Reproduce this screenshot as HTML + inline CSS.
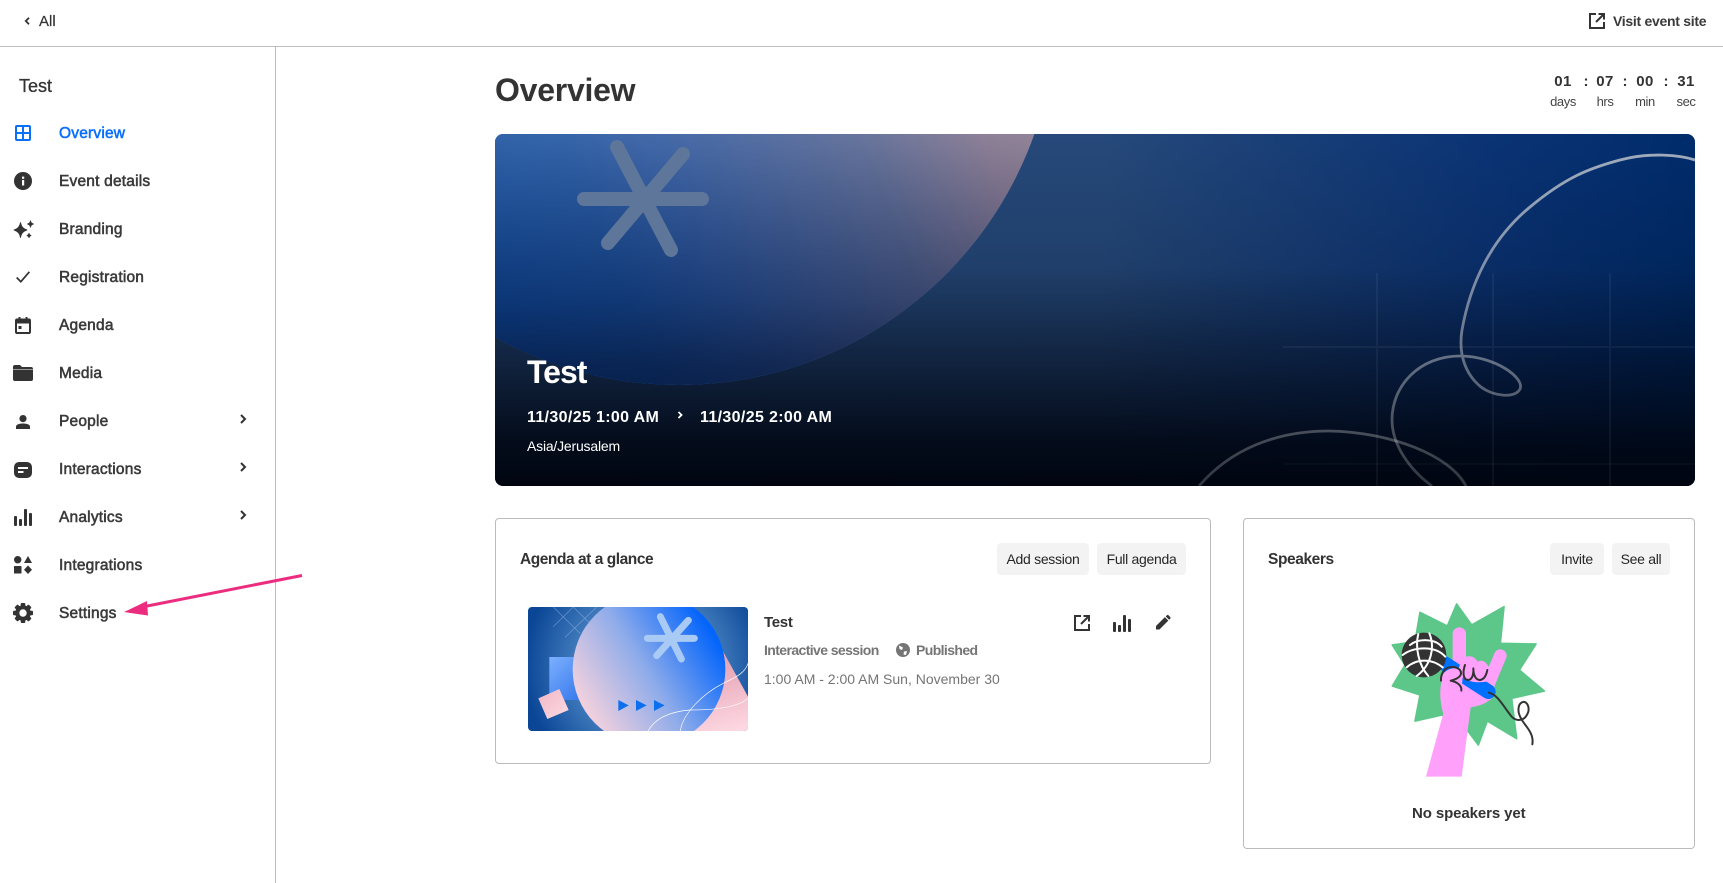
<!DOCTYPE html>
<html lang="en"><head><meta charset="utf-8"><title>Overview</title>
<style>
html,body{margin:0;padding:0;background:#fff;width:1723px;height:883px;overflow:hidden}
body{position:relative;font-family:"Liberation Sans",sans-serif;color:#333}
.t{position:absolute;white-space:nowrap;line-height:20px;height:20px}
.nav{left:59px;font-size:15.5px;font-weight:400;color:#3a3a3a;letter-spacing:.2px;-webkit-text-stroke:.55px currentColor}
.ic{position:absolute;overflow:visible}
.btn{position:absolute;top:543px;height:32px;line-height:32px;background:#f3f3f3;border-radius:4px;text-align:center;font-size:14px;color:#262626;letter-spacing:-.3px}
.card{position:absolute;box-sizing:border-box;border:1px solid #bbb;border-radius:4px;background:#fff}
.num{font-size:15px;font-weight:700;color:#333;text-align:center;width:40px;letter-spacing:.4px}
.lab{font-size:13px;color:#444;text-align:center;width:40px;letter-spacing:-.4px}
.sep{font-size:15px;font-weight:700;color:#333;text-align:center;width:10px}
.h{font-size:15.5px;font-weight:700;color:#333;letter-spacing:-.45px}
.g{font-size:14px;color:#757575;letter-spacing:-.3px}
</style></head><body>

<div style="position:absolute;left:0;top:46px;width:1723px;height:1px;background:#bdbdbd"></div>
<div style="position:absolute;left:275px;top:46px;width:1px;height:837px;background:#bdbdbd"></div>

<svg class="ic" style="left:24px;top:17px" width="6" height="8" viewBox="0 0 6 8"><path d="M5 .8L1.800 4L5 7.200" fill="none" stroke="#333" stroke-width="1.800"/></svg>
<div class="t" style="left:39px;top:12px;font-size:15px;color:#333;-webkit-text-stroke:.2px #333">All</div>

<svg class="ic" style="left:1589px;top:13px" width="16" height="16" viewBox="0 0 16 16"><path d="M7 1H1V15H15V9" fill="none" stroke="#333" stroke-width="2"/><path d="M9.500 1H15V6.500M15 1L7 9" fill="none" stroke="#333" stroke-width="2"/></svg>
<div class="t" style="left:1613px;top:11px;font-size:14px;font-weight:700;color:#3a3a3a;letter-spacing:-.28px">Visit event site</div>

<div class="t" style="left:19px;top:76px;font-size:18px;color:#333;-webkit-text-stroke:.3px #333">Test</div>

<!-- nav icons -->
<svg class="ic" style="left:15px;top:125px" width="16" height="16" viewBox="0 0 16 16"><rect x="1" y="1" width="14" height="14" rx="1" fill="none" stroke="#0a6ffb" stroke-width="2"/><path d="M8 1V15M1 8H15" stroke="#0a6ffb" stroke-width="2"/></svg>
<svg class="ic" style="left:14px;top:172px" width="18" height="18" viewBox="0 0 18 18"><circle cx="9" cy="9" r="9" fill="#333"/><rect x="8" y="8" width="2.200" height="5.500" fill="#fff"/><rect x="8" y="4.600" width="2.200" height="2.200" fill="#fff"/></svg>
<svg class="ic" style="left:13px;top:220px" width="21" height="19" viewBox="0 0 21 19"><g fill="#333" stroke="#333" stroke-width=".8" stroke-linejoin="round"><path d="M7.500 2.500C8.500 7 10 8.500 14 10C10 11.500 8.500 13 7.500 17.500C6.500 13 5 11.500 1 10C5 8.500 6.500 7 7.500 2.500Z"/><path d="M17.500 .8C18 2.800 18.500 3.300 20.500 4C18.500 4.700 18 5.200 17.500 7.200C17 5.200 16.500 4.700 14.500 4C16.500 3.300 17 2.800 17.500 .8Z"/><path d="M16 13.300C16.300 14.600 16.700 15 18 15.500C16.700 16 16.300 16.400 16 17.700C15.700 16.400 15.300 16 14 15.500C15.300 15 15.700 14.600 16 13.300Z"/></g></svg>
<svg class="ic" style="left:16px;top:271px" width="14" height="12" viewBox="0 0 14 12"><path d="M.7 6.500L4.800 10.700L13.400 .8" fill="none" stroke="#333" stroke-width="1.700"/></svg>
<svg class="ic" style="left:15px;top:317px" width="16" height="17" viewBox="0 0 16 17"><path d="M1.500 2.500H14.500A1 1 0 0 1 15 3.500V15A1 1 0 0 1 14.500 16H1.500A1 1 0 0 1 1 15V3.500A1 1 0 0 1 1.500 2.500Z" fill="none" stroke="#333" stroke-width="2"/><rect x="1" y="3" width="14" height="3.500" fill="#333"/><rect x="3.500" y="0" width="2" height="3" fill="#333"/><rect x="10.500" y="0" width="2" height="3" fill="#333"/><rect x="3.500" y="9" width="3" height="3" fill="#333"/></svg>
<svg class="ic" style="left:13px;top:365px" width="20" height="16" viewBox="0 0 20 16"><path d="M0 2A2 2 0 0 1 2 0H7L9 2H18A2 2 0 0 1 20 4H0Z" fill="#333"/><path d="M0 4.500H20V14A2 2 0 0 1 18 16H2A2 2 0 0 1 0 14Z" fill="#333"/></svg>
<svg class="ic" style="left:16px;top:415px" width="14" height="14" viewBox="0 0 14 14"><circle cx="7" cy="3.600" r="3.600" fill="#333"/><path d="M0 14V11.500C0 9.500 3.500 8.500 7 8.500S14 9.500 14 11.500V14Z" fill="#333"/></svg>
<svg class="ic" style="left:14px;top:462px" width="18" height="16" viewBox="0 0 18 16"><rect width="18" height="16" rx="5" fill="#333"/><rect x="4" y="5" width="10" height="2" fill="#fff"/><rect x="4" y="9" width="5.500" height="2" fill="#fff"/></svg>
<svg class="ic" style="left:14px;top:509px" width="18" height="17" viewBox="0 0 18 17"><rect x="0" y="7" width="3" height="10" rx="1" fill="#333"/><rect x="5" y="10" width="3" height="7" rx="1" fill="#333"/><rect x="10" y="0" width="3" height="17" rx="1" fill="#333"/><rect x="15" y="4" width="3" height="13" rx="1" fill="#333"/></svg>
<svg class="ic" style="left:14px;top:556px" width="18" height="18" viewBox="0 0 18 18"><circle cx="3.700" cy="3.700" r="3.700" fill="#333"/><path d="M14 0L18 7H10Z" fill="#333"/><rect x="0" y="10" width="7.500" height="7.500" rx=".5" fill="#333"/><path d="M14 9.500L18 13.700L14 18L10 13.700Z" fill="#333"/></svg>
<svg class="ic" style="left:13px;top:603px" width="20" height="20" viewBox="0 0 20 20"><g fill="#333"><rect x="7.700" y="0" width="4.600" height="20" rx="1"/><rect x="7.700" y="0" width="4.600" height="20" rx="1" transform="rotate(45 10 10)"/><rect x="7.700" y="0" width="4.600" height="20" rx="1" transform="rotate(90 10 10)"/><rect x="7.700" y="0" width="4.600" height="20" rx="1" transform="rotate(135 10 10)"/><circle cx="10" cy="10" r="7.800"/></g><circle cx="10" cy="10" r="3.700" fill="#fff"/></svg>

<div class="t nav" style="top:124px;color:#0a6ffb">Overview</div>
<div class="t nav" style="top:172px">Event details</div>
<div class="t nav" style="top:220px">Branding</div>
<div class="t nav" style="top:268px">Registration</div>
<div class="t nav" style="top:316px">Agenda</div>
<div class="t nav" style="top:364px">Media</div>
<div class="t nav" style="top:412px">People</div>
<div class="t nav" style="top:460px">Interactions</div>
<div class="t nav" style="top:508px">Analytics</div>
<div class="t nav" style="top:556px">Integrations</div>
<div class="t nav" style="top:604px">Settings</div>

<svg class="ic" style="left:240px;top:414px" width="6" height="10" viewBox="0 0 6 10"><path d="M1 1L5 5L1 9" fill="none" stroke="#333" stroke-width="2"/></svg>
<svg class="ic" style="left:240px;top:462px" width="6" height="10" viewBox="0 0 6 10"><path d="M1 1L5 5L1 9" fill="none" stroke="#333" stroke-width="2"/></svg>
<svg class="ic" style="left:240px;top:510px" width="6" height="10" viewBox="0 0 6 10"><path d="M1 1L5 5L1 9" fill="none" stroke="#333" stroke-width="2"/></svg>

<!-- pink annotation arrow -->
<svg class="ic" style="left:0;top:0;z-index:5" width="320" height="640" viewBox="0 0 320 640"><path d="M302 575.500L142 607" stroke="#ec2d7f" stroke-width="3" fill="none"/><path d="M124 612L147 601L148 615.500Z" fill="#ec2d7f"/></svg>

<!-- heading -->
<div class="t" style="left:495px;top:70px;height:40px;line-height:40px;font-size:32px;font-weight:700;color:#333;letter-spacing:-.25px">Overview</div>

<!-- timer -->
<div class="t num" style="left:1543px;top:71.500px">01</div><div class="t sep" style="left:1581px;top:71.500px">:</div>
<div class="t num" style="left:1585px;top:71.500px">07</div><div class="t sep" style="left:1620px;top:71.500px">:</div>
<div class="t num" style="left:1625px;top:71.500px">00</div><div class="t sep" style="left:1661px;top:71.500px">:</div>
<div class="t num" style="left:1666px;top:71.500px">31</div>
<div class="t lab" style="left:1543px;top:91.500px">days</div>
<div class="t lab" style="left:1585px;top:91.500px">hrs</div>
<div class="t lab" style="left:1625px;top:91.500px">min</div>
<div class="t lab" style="left:1666px;top:91.500px">sec</div>

<!-- hero -->
<svg style="position:absolute;left:495px;top:134px;border-radius:8px" width="1200" height="352" viewBox="495 134 1200 352">
<defs>
<linearGradient id="hb" gradientUnits="userSpaceOnUse" x1="1000" y1="134" x2="1695" y2="134"><stop offset="0" stop-color="#3a6eb4"/><stop offset=".15" stop-color="#3a6eb4"/><stop offset=".7" stop-color="#114dac"/><stop offset="1" stop-color="#00419d"/></linearGradient>
<linearGradient id="hc" gradientUnits="userSpaceOnUse" x1="520" y1="340" x2="1040" y2="130"><stop offset="0" stop-color="#2080ff"/><stop offset=".2" stop-color="#2c84fb"/><stop offset=".36" stop-color="#4a8efa"/><stop offset=".7" stop-color="#91a5e1"/><stop offset=".9" stop-color="#dcbcd8"/><stop offset="1" stop-color="#e8c4d8"/></linearGradient>
<linearGradient id="ho" gradientUnits="userSpaceOnUse" x1="0" y1="134" x2="0" y2="486"><stop offset="0" stop-color="#000510" stop-opacity=".35"/><stop offset=".38" stop-color="#000510" stop-opacity=".45"/><stop offset=".61" stop-color="#000510" stop-opacity=".68"/><stop offset=".87" stop-color="#000510" stop-opacity=".93"/><stop offset="1" stop-color="#000510" stop-opacity="1"/></linearGradient>
<linearGradient id="hoc" gradientUnits="userSpaceOnUse" x1="0" y1="134" x2="0" y2="486"><stop offset="0" stop-color="#000a24" stop-opacity=".38"/><stop offset=".47" stop-color="#000a24" stop-opacity=".62"/><stop offset=".66" stop-color="#000a24" stop-opacity=".78"/><stop offset="1" stop-color="#000a24" stop-opacity=".92"/></linearGradient>
<linearGradient id="hw" gradientUnits="userSpaceOnUse" x1="0" y1="134" x2="0" y2="300"><stop offset="0" stop-color="#fff" stop-opacity=".2"/><stop offset="1" stop-color="#fff" stop-opacity="0"/></linearGradient>
<linearGradient id="hl" gradientUnits="userSpaceOnUse" x1="0" y1="150" x2="0" y2="486"><stop offset="0" stop-color="#ddd" stop-opacity=".72"/><stop offset=".6" stop-color="#ddd" stop-opacity=".45"/><stop offset="1" stop-color="#ddd" stop-opacity=".22"/></linearGradient>
</defs>
<rect x="495" y="134" width="1200" height="352" fill="url(#hb)"/>
<rect x="495" y="134" width="1200" height="352" fill="url(#ho)"/>
<circle cx="679" cy="8" r="377" fill="url(#hc)"/>
<circle cx="679" cy="8" r="377" fill="url(#hw)"/>
<circle cx="679" cy="8" r="377" fill="url(#hoc)"/>
<g fill="none" stroke="#fff" stroke-opacity=".05" stroke-width="2"><path d="M1377 273V486M1493 273V486M1610 273V486M1283 347H1695"/></g>
<path d="M1283 464H1695" stroke="#fff" stroke-opacity=".03" stroke-width="2"/>
<g fill="none" stroke="url(#hl)" stroke-width="2.800"><path d="M1695 160C1680 155 1650 152 1620 160C1590 168 1566 177 1530 207C1490 240 1470 285 1462 330C1458 355 1466 375 1481 387C1493 396 1515 399 1520 389C1525 378 1495 356 1460 356C1420 356 1392 385 1392 420C1392 445 1410 470 1432 486"/><path d="M1199 486C1230 450 1275 431 1329 431C1390 432 1450 455 1466 486"/></g>
<g stroke="#5e7699" stroke-width="14" stroke-linecap="round"><path d="M584 199H702M617 147L671 250M683 154L608 243"/></g>
</svg>
<div class="t" style="left:527px;top:352px;height:40px;line-height:40px;font-size:32px;font-weight:700;color:#fff;letter-spacing:-1px">Test</div>
<div class="t" style="left:527px;top:407.500px;font-size:16px;font-weight:700;color:#fff;letter-spacing:.35px">11/30/25 1:00 AM</div>
<svg class="ic" style="left:677px;top:410px" width="6" height="10" viewBox="0 0 6 10"><path d="M1.500 2L4.500 5L1.500 8" fill="none" stroke="#fff" stroke-width="1.800"/></svg>
<div class="t" style="left:700px;top:407.500px;font-size:16px;font-weight:700;color:#fff;letter-spacing:.35px">11/30/25 2:00 AM</div>
<div class="t" style="left:527px;top:435.500px;font-size:14px;color:#fff;letter-spacing:-.2px">Asia/Jerusalem</div>

<!-- agenda card -->
<div class="card" style="left:495px;top:518px;width:716px;height:246px"></div>
<div class="t h" style="left:520px;top:550px">Agenda at a glance</div>
<div class="btn" style="left:997px;width:92px">Add session</div>
<div class="btn" style="left:1097px;width:89px">Full agenda</div>

<svg style="position:absolute;left:528px;top:607px;border-radius:4px" width="220" height="124" viewBox="114 291 660 372">
<defs>
<radialGradient id="tb" gradientUnits="userSpaceOnUse" cx="470" cy="470" r="370"><stop offset="0" stop-color="#6aa0d8"/><stop offset=".6" stop-color="#3e78ba"/><stop offset="1" stop-color="#0a4596"/></radialGradient>
<linearGradient id="tc" gradientUnits="userSpaceOnUse" x1="270" y1="600" x2="660" y2="360"><stop offset="0" stop-color="#f9d3dd"/><stop offset=".5" stop-color="#8facea"/><stop offset="1" stop-color="#0465fb"/></linearGradient>
<linearGradient id="tp" gradientUnits="userSpaceOnUse" x1="680" y1="430" x2="740" y2="663"><stop offset="0" stop-color="#e39cb0"/><stop offset="1" stop-color="#fdd8e2"/></linearGradient>
<linearGradient id="ts" x1="0" y1="0" x2="1" y2="1"><stop offset="0" stop-color="#7cb0ff"/><stop offset="1" stop-color="#2b70e8"/></linearGradient>
<linearGradient id="td" x1="0" y1="0" x2="1" y2="1"><stop offset="0" stop-color="#f2b6c4"/><stop offset="1" stop-color="#fbdbe3"/></linearGradient>
</defs>
<rect x="114" y="291" width="660" height="372" fill="url(#tb)"/>
<g stroke="#9cc0ea" stroke-opacity=".55" stroke-width="2" fill="none"><path d="M190 350L250 291M225 382L320 291M250 291L335 375M190 291L270 370M280 382L360 300"/></g>
<path d="M697 420L774 560V663H600Z" fill="url(#tp)"/>
<rect x="178" y="441" width="130" height="129" fill="url(#ts)"/>
<circle cx="477" cy="478" r="229" fill="url(#tc)"/>
<path d="M145 565L208 537L236 600L172 627Z" fill="url(#td)"/>
<g stroke="#a9caf5" stroke-width="21" stroke-linecap="round"><path d="M472 385H613M511 320L574 447M595 331L500 437"/></g>
<g fill="#0b6fee"><path d="M385 570L416 586L385 603Z"/><path d="M438 570L470 586L438 603Z"/><path d="M492 570L524 586L492 603Z"/></g>
<g fill="none" stroke="#fff" stroke-width="2"><path d="M474 663C495 625 540 605 600 600C660 600 740 595 774 565"/><path d="M571 663C578 610 640 550 700 520C735 503 765 490 774 460"/></g>
</svg>

<div class="t" style="left:764px;top:612.500px;font-size:15px;font-weight:700;color:#333;letter-spacing:-.3px">Test</div>
<div class="t g" style="left:764px;top:640px;font-weight:700;letter-spacing:-.6px">Interactive session</div>
<svg class="ic" style="left:896px;top:643px" width="14" height="14" viewBox="0 0 14 14"><circle cx="7" cy="7" r="7" fill="#757575"/><path d="M3 2.500L7 4.500L6 7L3.500 6ZM8 8.500L11 8L10 12L7.500 11.500Z" fill="#fff"/></svg>
<div class="t g" style="left:916px;top:640px;font-weight:700;letter-spacing:-.6px">Published</div>
<div class="t g" style="left:764px;top:669px;letter-spacing:0">1:00 AM - 2:00 AM Sun, November 30</div>

<svg class="ic" style="left:1074px;top:615px" width="16" height="16" viewBox="0 0 16 16"><path d="M7 1H1V15H15V9" fill="none" stroke="#333" stroke-width="2"/><path d="M9.500 1H15V6.500M15 1L7 9" fill="none" stroke="#333" stroke-width="2"/></svg>
<svg class="ic" style="left:1113px;top:615px" width="18" height="17" viewBox="0 0 18 17"><rect x="0" y="7" width="3" height="10" rx="1" fill="#333"/><rect x="5" y="10" width="3" height="7" rx="1" fill="#333"/><rect x="10" y="0" width="3" height="17" rx="1" fill="#333"/><rect x="15" y="4" width="3" height="13" rx="1" fill="#333"/></svg>
<svg class="ic" style="left:1156px;top:615px" width="14.500" height="14.500" viewBox="0 0 16 16"><path d="M0 16V12.200L9.800 2.400L13.600 6.200L3.800 16ZM10.700 1.500L12.200 .2A1 1 0 0 1 13.600 .2L15.800 2.400A1 1 0 0 1 15.800 3.800L14.500 5.300Z" fill="#333"/></svg>

<!-- speakers card -->
<div class="card" style="left:1243px;top:518px;width:452px;height:331px"></div>
<div class="t h" style="left:1268px;top:550px;letter-spacing:-.4px">Speakers</div>
<div class="btn" style="left:1550px;width:54px">Invite</div>
<div class="btn" style="left:1612px;width:58px">See all</div>

<svg style="position:absolute;left:1360px;top:590px" width="200" height="200" viewBox="0 0 600 600">
<path d="M290 42L335 105L432 50L421 160L528 162L478 240L553 303L455 325L470 446L382 393L355 465L325 425L245 375L165 393L180 315L97 288L135 225L97 165L165 155L180 67L262 108Z" fill="#5dc78a" stroke="#5dc78a" stroke-width="5" stroke-linejoin="round"/>
<path d="M198 560L250 370C240 340 238 300 245 275L300 225L410 230L400 320C385 340 350 350 332 352L305 560Z" fill="#ffa0fa"/>
<path d="M298 132V235" stroke="#ffa0fa" stroke-width="40" stroke-linecap="round"/>
<path d="M421 197L380 295" stroke="#ffa0fa" stroke-width="38" stroke-linecap="round"/>
<path d="M245 215L385 305" stroke="#0070ff" stroke-width="44" stroke-linecap="round"/>
<path d="M243 272C245 245 270 230 295 236L308 205C330 190 350 205 352 215C372 205 385 225 386 235L380 275C345 280 325 274 308 262L304 305C280 306 250 300 243 272Z" fill="#ffa0fa"/>
<circle cx="192" cy="195" r="67" fill="#333"/>
<g fill="none" stroke="#fff" stroke-width="6" stroke-linecap="round"><path d="M175 132C165 170 175 225 205 258M208 130C225 170 215 225 170 258M128 195C160 170 225 165 256 200M150 165C175 145 225 145 245 170M140 232C170 205 215 205 248 232"/></g>
<g fill="none" stroke="#333" stroke-width="6" stroke-linecap="round" stroke-linejoin="round"><path d="M304 302C306 287 292 276 272 272C288 268 302 262 303 250C303 235 285 229 268 232C250 236 242 255 243 272"/><path d="M315 225C308 245 308 270 325 270C340 268 341 245 340 235C340 255 347 270 360 270C375 268 380 250 382 240"/><path d="M387 308C415 315 430 350 455 380C470 395 495 395 505 365C510 340 490 325 478 345C470 365 480 385 500 410C515 430 520 445 517 463"/></g>
</svg>
<div class="t" style="left:1412px;top:803.500px;font-size:15px;font-weight:700;color:#333;letter-spacing:-.1px">No speakers yet</div>

</body></html>
